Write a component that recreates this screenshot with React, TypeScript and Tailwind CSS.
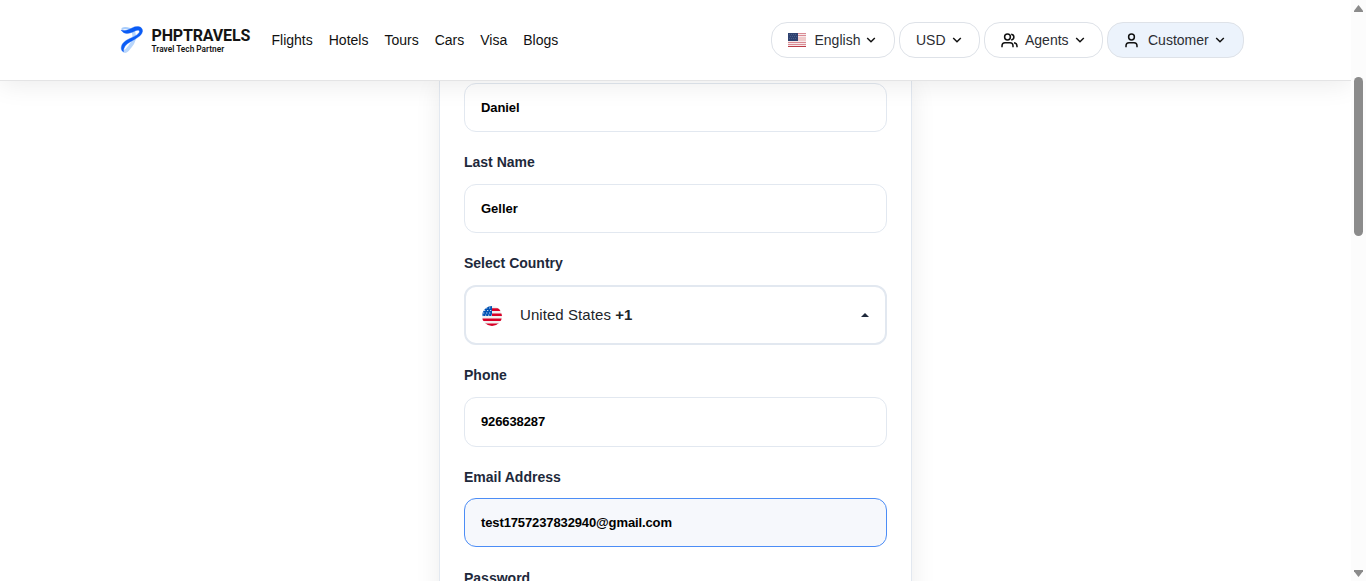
import React from "react";

const navItems = ["Flights", "Hotels", "Tours", "Cars", "Visa", "Blogs"];

function Logo() {
  return (
    <div className="flex items-center">
      <svg width="24" height="28" viewBox="0 0 24 28" fill="none" className="shrink-0">
        <path d="M2.5 2.6C6 0.8 9 3 13 4" stroke="#a9cdfb" strokeWidth="2" strokeLinecap="round" />
        <path d="M13.5 6C15.5 12 13 17 10 20.5C8 23 6.5 25.3 5 25.3" stroke="#b9d6fb" strokeWidth="3.6" strokeLinecap="round" />
        <path d="M1 4C5.5 5.2 8.5 3.8 12 2C17 -0.6 23 0.4 22.5 5.5C21.5 11.8 10 14.5 6 19C4 21.5 3.3 23.6 3.5 26C.7 24.5.7 20.8 2.4 18C6 12.3 16 11.6 19.2 6.4C20.2 4.2 17.8 3.8 15 5C9.5 7.6 4.5 9.2 1 4Z" fill="#0b5cf5" stroke="#0b5cf5" strokeWidth=".35" />
      </svg>
      <div className="ml-[7.5px] flex w-[99.5px] flex-col pt-px font-[Roboto,sans-serif] font-bold whitespace-nowrap text-[#141414]">
        <span className="h-[15px] text-[16px] leading-[15px] tracking-[-0.15px]">PHPTRAVELS</span>
        <span className="h-[11px] pt-px text-[8.3px] leading-[11px] font-semibold">Travel Tech Partner</span>
      </div>
    </div>
  );
}

function Chevron() {
  return (
    <svg width="10" height="6" viewBox="0 0 10 6" fill="none" className="shrink-0">
      <path d="M1.2 1L5 4.7L8.8 1" stroke="#111" strokeWidth="1.5" />
    </svg>
  );
}

function Flag() {
  return (
    <svg width="18" height="14" viewBox="0 0 18 14" shapeRendering="crispEdges" className="shrink-0">
      <path fill="#f6e9ea" d="M0 0h18v14H0z" />
      <path fill="#d98a93" d="M0 0h18v1H0zM0 2h18v1H0zM0 9h18v1H0zM0 11h18v1H0z" />
      <path fill="#efcaca" d="M0 4h18v4H0z" />
      <path fill="#bd3d49" d="M0 13h18v1H0z" />
      <path fill="#2e416f" d="M0 0h10v8H0z" />
      <path stroke="#4a5d88" strokeDasharray="1 1" d="M1 1.5h8M2 3.5h8M1 5.5h8" />
    </svg>
  );
}

function UserIcon({ pair = false }: { pair?: boolean }) {
  return (
    <svg width={pair ? 17 : 13} height="15" viewBox={pair ? "0 0 17 15" : "0 0 13 15"} fill="none" stroke="#111" strokeWidth="1.5" className="shrink-0">
      <circle cx="6.5" cy="4" r="2.9" />
      <path d="M1 14.3V12.8C1 10.8 2.2 9.7 4 9.7H9C10.8 9.7 12 10.8 12 12.8V14.3" />
      {pair && <path d="M10.2 1.2C13.8 1.7 13.8 6.3 10.2 6.9M13 9.8C15 10.2 16 11.3 16 13V14.3" />}
    </svg>
  );
}

const pill =
  "flex h-9 items-center rounded-2xl border border-[#dee2e8] text-[14px] text-[#2b2d33]";

function Header() {
  return (
    <header className="relative z-10 flex h-[81px] shrink-0 items-center border-b border-[#e4e4e5] bg-white pr-[107px] pl-[120px] shadow-[0_4px_24px_rgba(0,0,0,0.08)]">
      <Logo />
      <nav className="ml-[20.5px] flex gap-4 text-[14px] text-[#111]">
        {navItems.map((item) => (
          <a key={item}>{item}</a>
        ))}
      </nav>
      <div className="ml-auto flex gap-1">
        <button className={`${pill} w-[124px] pl-4`}>
          <Flag />
          <span className="mr-[5.5px] ml-[8.5px]">English</span>
          <Chevron />
        </button>
        <button className={`${pill} w-[81px] pl-4`}>
          <span className="mr-[6px]">USD</span>
          <Chevron />
        </button>
        <button className={`${pill} w-[119px] pl-4`}>
          <UserIcon pair />
          <span className="mr-[6px] ml-[7px]">Agents</span>
          <Chevron />
        </button>
        <button className={`${pill} w-[137px] bg-[#ecf3fc] pl-[17px]`}>
          <UserIcon />
          <span className="mr-[6px] ml-[10px]">Customer</span>
          <Chevron />
        </button>
      </div>
    </header>
  );
}

function Label({ children }: { children: React.ReactNode }) {
  return <label className="block h-[20px] text-[14px] leading-5 font-bold text-[#1e293b]">{children}</label>;
}

function Field({ value, className }: { value: string; className: string }) {
  return (
    <div className={`flex items-center rounded-xl border px-4 text-[13px] font-bold text-black ${className}`}>
      {value}
    </div>
  );
}

function RoundFlag() {
  return (
    <svg width="20" height="20" viewBox="0 0 20 20" className="shrink-0">
      <clipPath id="round">
        <circle cx="10" cy="10" r="10" />
      </clipPath>
      <g clipPath="url(#round)">
        <path fill="#f0f0f0" d="M0 0h20v20H0z" />
        <path fill="#d80027" d="M9 2.3h11v2.6H9zM9 7.4h11V10H9zM0 12.5h20v2.6H0zM0 17.6h20V20H0z" />
        <path fill="#0052b4" d="M0 0h10v10H0z" />
        <path stroke="#d5e3f4" strokeWidth=".9" strokeDasharray="1.3 1.7" d="M4 2h6M2 4.5h8M1 7h9M0 9.2h10" />
      </g>
    </svg>
  );
}

function Scrollbar() {
  return (
    <div className="flex w-[15px] shrink-0 flex-col items-center bg-[#fcfcfc] pt-[5px] pb-[4px]">
      <svg width="9" height="7" viewBox="0 0 9 7">
        <path d="M4.5 0L9 5.8V7H0V5.8Z" fill="#8b8b8b" />
      </svg>
      <div className="mt-[65px] h-[159px] w-[9px] rounded-full bg-[#8b8b8b]" />
      <svg width="9" height="7" viewBox="0 0 9 7" className="mt-auto">
        <path d="M0 0H9V1.2L4.5 7L0 1.2Z" fill="#8b8b8b" />
      </svg>
    </div>
  );
}

export default function App() {
  return (
    <div className="flex h-[581px] w-[1366px] overflow-hidden bg-white font-['Liberation_Sans',Arial,sans-serif]">
      <div className="flex h-full w-[1351px] flex-col overflow-hidden">
        <Header />
        <main className="flex justify-center">
          <section className="h-[540px] w-[473px] shrink-0 border-x border-[#e2e8f0] bg-white px-6 pt-[2px] shadow-[0_4px_24px_rgba(0,0,0,0.08)]">
            <Field value="Daniel" className="h-[49px] border-[#e2e8f0] tracking-[-0.1px]" />
            <div className="pt-5">
              <Label>Last Name</Label>
              <Field value="Geller" className="mt-3 h-[49px] border-[#e2e8f0]" />
            </div>
            <div className="pt-5">
              <Label>Select Country</Label>
              <div className="mt-3 flex h-[60px] items-center rounded-xl border-2 border-[#e2e8f0] pr-4 pl-4 text-[15px] text-[#212529]">
                <div className="pt-[2px]">
                  <RoundFlag />
                </div>
                <span className="ml-[18px] tracking-[0.07px]">
                  United States <strong>+1</strong>
                </span>
                <svg width="8" height="4" viewBox="0 0 8 4" className="ml-auto">
                  <path d="M4 0L8 4H0Z" fill="#1e293b" />
                </svg>
              </div>
            </div>
            <div className="pt-5">
              <Label>Phone</Label>
              <Field value="926638287" className="mt-3 h-[50px] border-[#e2e8f0] tracking-[-0.12px]" />
            </div>
            <div className="pt-5">
              <Label>Email Address</Label>
              <Field value="test1757237832940@gmail.com" className="mt-[11px] h-[49px] border-[#4c8df6] bg-[#f6f8fc] tracking-[-0.12px]" />
            </div>
            <div className="pt-[21px]">
              <Label>Password</Label>
            </div>
          </section>
        </main>
      </div>
      <Scrollbar />
    </div>
  );
}
